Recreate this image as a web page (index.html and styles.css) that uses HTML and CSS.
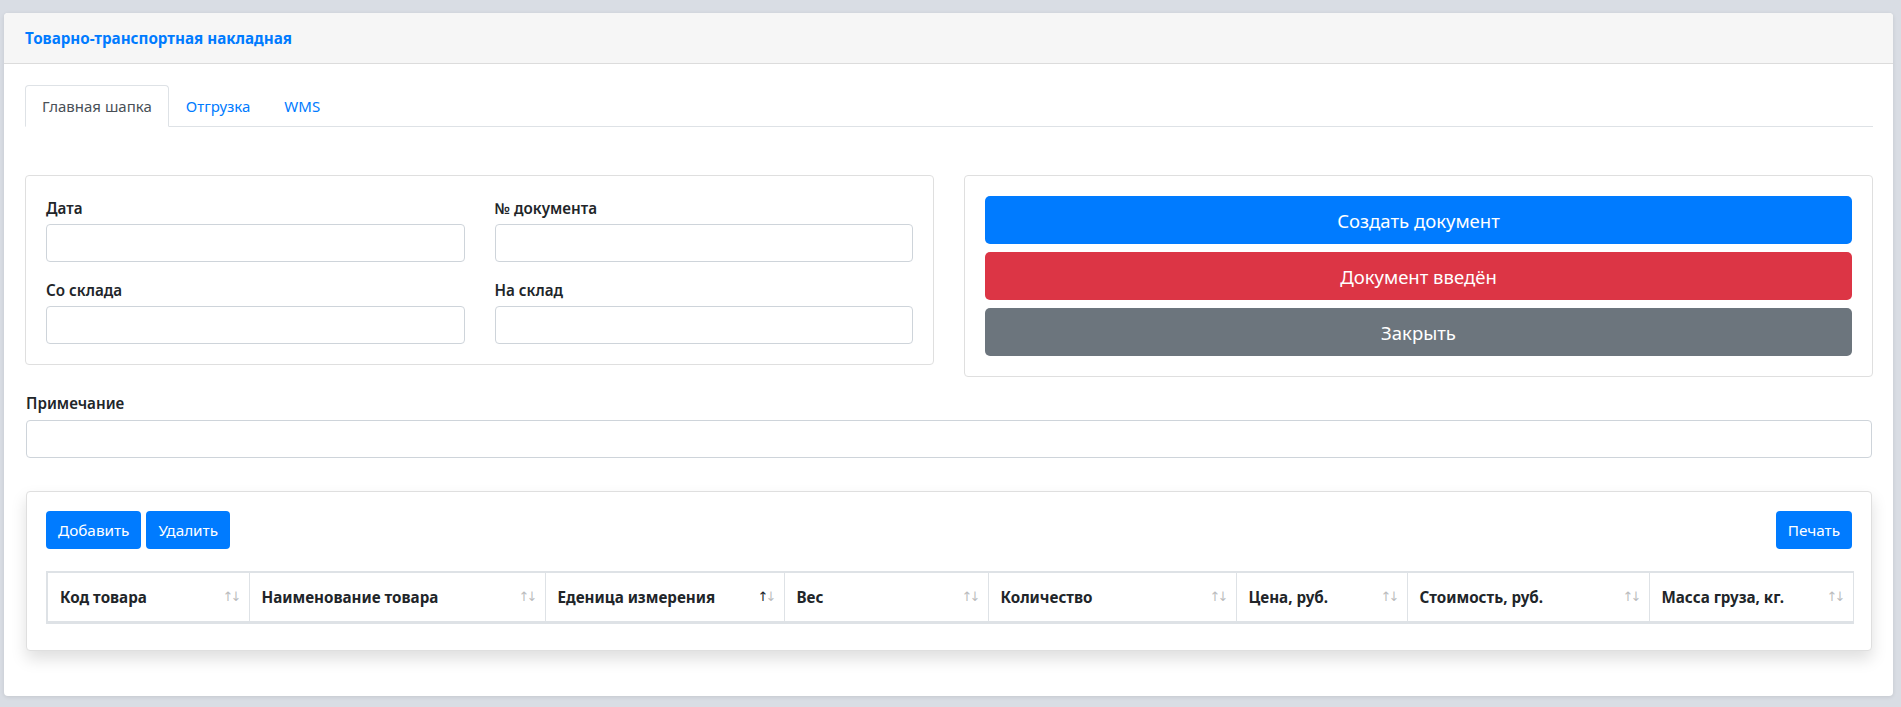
FILE: index.html
```html
<!DOCTYPE html>
<html lang="ru">
<head>
<meta charset="utf-8">
<title>Товарно-транспортная накладная</title>
<link rel="stylesheet" href="styles.css">
</head>
<body>
<div class="main-card">
  <div class="main-header"><span class="title">Товарно-транспортная накладная</span></div>
  <div class="main-body">
    <ul class="tabs">
      <li class="tab active">Главная шапка</li>
      <li class="tab">Отгрузка</li>
      <li class="tab">WMS</li>
    </ul>

    <div class="top-row">
      <div class="box fields">
        <div class="field"><label class="lbl">Дата</label><input class="inp" type="text"></div>
        <div class="field"><label class="lbl">№ документа</label><input class="inp" type="text"></div>
        <div class="field"><label class="lbl">Со склада</label><input class="inp" type="text"></div>
        <div class="field"><label class="lbl">На склад</label><input class="inp" type="text"></div>
      </div>
      <div class="box actions">
        <button class="btn-lg btn-blue">Создать документ</button>
        <button class="btn-lg btn-red">Документ введён</button>
        <button class="btn-lg btn-gray">Закрыть</button>
      </div>
    </div>

    <div class="note">
      <label class="lbl">Примечание</label>
      <input class="inp" type="text">
    </div>

    <div class="table-card">
      <div class="toolbar">
        <div class="toolbar-left">
          <button class="btn btn-blue">Добавить</button>
          <button class="btn btn-blue">Удалить</button>
        </div>
        <button class="btn btn-blue">Печать</button>
      </div>
      <table class="grid">
        <thead>
          <tr>
            <th class="c1"><span class="sort">Код товара</span></th>
            <th class="c2"><span class="sort">Наименование товара</span></th>
            <th class="c3"><span class="sort asc">Еденица измерения</span></th>
            <th class="c4"><span class="sort">Вес</span></th>
            <th class="c5"><span class="sort">Количество</span></th>
            <th class="c6"><span class="sort">Цена, руб.</span></th>
            <th class="c7"><span class="sort">Стоимость, руб.</span></th>
            <th class="c8"><span class="sort">Масса груза, кг.</span></th>
          </tr>
        </thead>
      </table>
    </div>
  </div>
</div>
</body>
</html>
```
FILE: styles.css
```css
* { box-sizing: border-box; }
html, body { height: 100%; }
body {
  margin: 0;
  padding: 13px 8px 12px 4px;
  background: #d9dde4;
  font-family: "Noto Sans", "Open Sans", sans-serif;
  color: #212529;
}
.main-card {
  background: #fff;
  border-radius: 4px;
  box-shadow: 0 1px 4px rgba(0,0,0,.10);
  overflow: hidden;
}
.main-header {
  height: 51px;
  background: #f6f6f6;
  border-bottom: 1px solid #dcdcdc;
  padding: 0 21px;
  display: flex;
  align-items: center;
}
.title {
  color: #007bff;
  font-weight: 700;
  font-size: 15.2px;
}
.main-body {
  padding: 21px 20px 45px 21px;
}
.tabs {
  list-style: none;
  margin: 0;
  padding: 0;
  display: flex;
  border-bottom: 1px solid #dee2e6;
}
.tab {
  padding: 8px 16px;
  line-height: 24px;
  font-size: 15px;
  color: #007bff;
  border: 1px solid transparent;
  border-top-left-radius: 4px;
  border-top-right-radius: 4px;
  margin-bottom: -1px;
}
.tab.active {
  color: #495057;
  border-color: #dee2e6 #dee2e6 #fff;
  background: #fff;
}
.top-row {
  margin-top: 48px;
  display: grid;
  grid-template-columns: 1fr 1fr;
  column-gap: 30px;
  align-items: start;
}
.box {
  border: 1px solid #dfdfdf;
  border-radius: 4px;
  padding: 20px;
}
.fields {
  display: grid;
  grid-template-columns: 1fr 1fr;
  column-gap: 30px;
  row-gap: 16px;
}
.field { display: flex; flex-direction: column; }
.lbl {
  display: block;
  font-size: 15.2px;
  font-weight: 600;
  line-height: 24px;
  margin-bottom: 4px;
}
.inp {
  display: block;
  width: 100%;
  height: 38px;
  border: 1px solid #ced4da;
  border-radius: 4px;
  background: #fff;
  font: inherit;
  padding: 6px 12px;
}
.actions {
  display: flex;
  flex-direction: column;
  gap: 8px;
}
.btn-lg, .btn {
  border: 1px solid transparent;
  color: #fff;
  font-family: inherit;
  cursor: pointer;
}
.btn-lg {
  height: 48px;
  font-size: 18.5px;
  border-radius: 5px;
  width: 100%;
}
.btn {
  height: 38px;
  font-size: 15.3px;
  padding: 0 11px;
  border-radius: 4px;
}
.btn-blue { background: #007bff; }
.btn-red { background: #dc3545; }
.btn-gray { background: #6c757d; }
.note {
  margin: 14px 1px 0 1px;
}
.note .lbl { margin-bottom: 5px; }
.table-card {
  margin: 33px 1px 0 1px;
  border: 1px solid #dfdfdf;
  border-radius: 4px;
  padding: 19px;
  background: #fff;
  box-shadow: 0 8px 16px rgba(0,0,0,.13);
}
.toolbar {
  display: flex;
  justify-content: space-between;
}
.toolbar-left { display: flex; gap: 5px; }
.grid {
  margin-top: 22px;
  margin-bottom: 7px;
  width: 100%;
  table-layout: fixed;
  border-collapse: collapse;
}
.grid th {
  text-align: left;
  font-size: 15.2px;
  font-weight: 700;
  line-height: 24px;
  padding: 12px 12px;
  border: 1px solid #dee2e6;
  border-top: 2px solid #dee2e6;
  border-bottom: 3px solid #dee2e6;
  position: relative;
}
.grid th:first-child { border-left-width: 2px; }
.c1 { width: 202px; }
.c2 { width: 296px; }
.c3 { width: 239px; }
.c4 { width: 204px; }
.c5 { width: 248px; }
.c6 { width: 171px; }
.c7 { width: 242px; }
.c8 { width: 204px; }
.sort::before, .sort::after {
  position: absolute;
  top: 16px;
  font-family: "DejaVu Sans", sans-serif;
  font-weight: 400;
  font-size: 13px;
  line-height: 16px;
  color: #212529;
  opacity: .3;
}
.sort::before { content: "\2191"; right: 15px; }
.sort::after { content: "\2193"; right: 7px; }
.sort.asc::before { opacity: 1; }
```
